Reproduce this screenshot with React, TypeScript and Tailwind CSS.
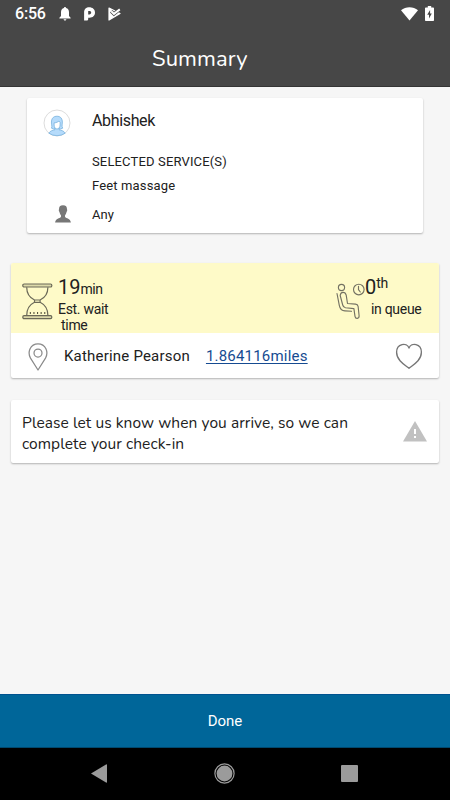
import type { ReactNode } from 'react';

function StatusBar() {
  return (
    <div className="flex h-[27px] items-center text-white">
      <span className="ml-[15px] w-[44px] text-[16px] leading-[27px] font-medium tracking-[-0.2px]">6:56</span>
      <svg width="12" height="14" viewBox="0 0 12 14" fill="currentColor">
        <path d="M6 0C5.300 0 5 .5 5 1.100C2.900 1.600 2 3.300 2 5.300V9L.4 10.700V11.500H11.600V10.700L10 9V5.300C10 3.300 9.100 1.600 7 1.100C7 .5 6.700 0 6 0ZM4.600 12.200C4.700 13 5.300 13.500 6 13.500S7.300 13 7.400 12.200Z" />
      </svg>
      <svg className="ml-[13px]" width="11" height="14" viewBox="0 0 11 14" fill="currentColor" fillRule="evenodd">
        <path d="M5.200.3C8.500.3 11 2.400 11 5.600S8.600 10.800 5.700 10.800H4.200V12C4.200 13 3.500 13.600 2.500 13.600H.1V5.200C.1 2.300 2.200.3 5.200.3ZM4.200 3.900V7.400H5.300C6.500 7.400 7.200 6.700 7.200 5.600S6.500 3.900 5.300 3.900Z" />
      </svg>
      <svg className="ml-[13px]" width="13" height="14" viewBox="0 0 13 14">
        <path d="M1 1L12 6.500L1 13Z" fill="currentColor" stroke="currentColor" strokeWidth="1.200" strokeLinejoin="round" />
        <path d="M3.200 4.200L5.900 6.900L13 1.300" fill="none" stroke="#474747" strokeWidth="3.400" />
        <path d="M3.300 4.300L5.900 6.900L11.800 2.400" fill="none" stroke="currentColor" strokeWidth="2" />
      </svg>
      <svg className="ml-auto" width="17" height="14" viewBox="0 0 17 14" fill="currentColor">
        <path d="M0 3.200C4.700-.7 12.300-.7 17 3.200L8.500 13.500Z" />
      </svg>
      <svg className="mr-[16px] ml-[7px]" width="9" height="15" viewBox="0 0 9 15">
        <path d="M2.800 0H6.200V1.500H8.200Q9 1.500 9 2.300V14.200Q9 15 8.200 15H.8Q0 15 0 14.200V2.300Q0 1.500.8 1.500H2.800Z" fill="currentColor" />
        <path d="M5.100 4L2.200 8.800H4V12.500L6.800 7.500H5.100Z" fill="#474747" />
      </svg>
    </div>
  );
}

function Avatar() {
  return (
    <svg width="28" height="28" viewBox="0 0 28 28">
      <circle cx="14" cy="14" r="13" fill="#fff" stroke="#dcdcdc" strokeWidth="1" />
      <g stroke="#79b2de" strokeWidth=".8" strokeLinejoin="round">
        <path d="M8.500 19.200C9.500 17 8 15 8.500 12C8.800 8.800 11 7.200 14 7.200S19 9 19.300 12C19.700 15 18.300 17 19.700 19.200L17.500 20H10.500Z" fill="#b5dbfb" />
        <path d="M5.800 24.200C7.200 21.600 9.800 21.400 12 20.700V18H16V20.700C18.200 21.400 20.800 21.600 22.200 24.200Q18.400 26.700 14 26.700T5.800 24.200Z" fill="#b5dbfb" />
        <path d="M11.100 13.900C13.500 13.700 15 12.900 16 12L17.100 13.500V16C17 18.300 15.700 20 14 20S11.200 18.300 11.100 16Z" fill="#fff" />
      </g>
    </svg>
  );
}

function PersonIcon() {
  return (
    <svg width="16" height="18" viewBox="0 0 18 18" preserveAspectRatio="none" fill="#777">
      <path d="M9 .2C12.200.2 13.700 1.800 13.500 4.400C14 4.500 13.700 6.300 13 6.900C12.700 8.500 11.800 9.400 11.300 10.200V12C12.900 13.600 17 13.300 17.900 17.500H.1C1 13.300 5.100 13.600 6.700 12V10.200C6.200 9.400 5.300 8.500 5 6.900C4.300 6.300 4 4.500 4.500 4.400C4.300 1.800 5.800.2 9 .2Z" />
    </svg>
  );
}

function HourglassIcon() {
  return (
    <svg width="31" height="37" viewBox="0 0 31 37" fill="none" stroke="#6b6958" strokeWidth="1.200">
      <rect x=".8" y="1" width="29" height="3" rx="1.300" fill="#dcd9a9" />
      <rect x=".8" y="32.600" width="29" height="3" rx="1.300" fill="#dcd9a9" />
      <path d="M4.700 4.200C4.700 11 7.400 14.500 12.500 17V19.200C7.400 21.700 4.700 25.500 4.700 32.400M25.900 4.200C25.900 11 23.200 14.500 18.100 17V19.200C23.200 21.700 25.900 25.500 25.900 32.400M12.300 17H18.300M12.300 19.300H18.300" />
      <path d="M7.800 30H24" stroke="#55533f" strokeWidth="2" strokeDasharray="1.100 2.500" />
    </svg>
  );
}

function WaitingIcon() {
  return (
    <svg width="29" height="37" viewBox="0 0 29 37" fill="none" stroke="#747263" strokeWidth="1.150" strokeLinecap="round" strokeLinejoin="round">
      <circle cx="5.500" cy="4.500" r="3.100" />
      <circle cx="22.800" cy="6.500" r="5.300" />
      <path d="M22.500 3.200V6.700L24.300 9" />
      <path d="M4.200 12.500C4.500 8.300 9.300 8.300 10.200 12.200L11.500 20.500L19.500 21.100Q21.700 21.400 22.100 23.300L23.100 32.800C23.300 36 19.500 36.200 19 33.300L17.900 25.600L9.500 24.800Q7.300 24.400 6.700 22Z" />
      <path d="M1 10.500L3.300 22.300C4 26 5.500 27.700 9 27.900L15.500 28.300" />
    </svg>
  );
}

function PinIcon() {
  return (
    <svg width="20" height="28" viewBox="0 0 20 28" fill="none" stroke="#8a8a8a" strokeWidth="1.250">
      <path d="M10 27L2.500 15.200C-.8 9.300 2.200 .8 10 .8S20.800 9.300 17.500 15.200Z" strokeLinejoin="round" />
      <circle cx="10" cy="10" r="4" />
    </svg>
  );
}

function HeartIcon() {
  return (
    <svg width="28" height="27" viewBox="0 0 28 27" fill="none" stroke="#777" strokeWidth="1.350">
      <path d="M14 25.300C10 22 1.600 17.500 1.600 9.200C1.600 .5 11.800-1 14 5C16.200-1 26.400 .5 26.400 9.200C26.400 17.500 18 22 14 25.300Z" strokeLinejoin="round" />
    </svg>
  );
}

function WarningIcon() {
  return (
    <svg width="24" height="21" viewBox="0 0 24 21">
      <path d="M12 0L24 20.500H0Z" fill="#c1c1c1" />
      <path d="M11 8H13V13H11ZM11 15H13V17H11Z" fill="#fff" />
    </svg>
  );
}

function Card({ className, children }: { className: string; children: ReactNode }) {
  return (
    <section className={`overflow-hidden rounded-[2px] bg-white shadow-[0_1px_2px_rgba(0,0,0,0.28)] ${className}`}>
      {children}
    </section>
  );
}

export default function App() {
  return (
    <div className="flex h-[800px] w-[450px] flex-col bg-[#f6f6f6] font-['Roboto','Liberation_Sans',sans-serif] text-[#212121]">
      <header className="h-[87px] shrink-0 border-b border-[#353535] bg-[#474747]">
        <StatusBar />
        <h1 className="ml-[152px] pt-[15px] font-['Nunito','Lato',sans-serif] text-[22px] leading-[34px] tracking-[0.1px] text-white">Summary</h1>
      </header>

      <main className="flex-1">
        {/* Guest and selected services */}
        <Card className="mx-[27px] mt-[11px] h-[135px]">
          <div className="flex h-[50px] items-center pl-[16px]">
            <Avatar />
            <span className="-mt-[4px] ml-[21px] text-[16px] leading-5 tracking-[-0.35px]">Abhishek</span>
          </div>
          <div className="pt-[4px] pl-[65px] text-[13px]">
            <p className="leading-[20px] tracking-[0.15px]">SELECTED SERVICE(S)</p>
            <p className="mt-[4px] leading-[20px] tracking-[0.15px]">Feet massage</p>
          </div>
          <div className="mt-[7px] flex items-center pl-[28px]">
            <PersonIcon />
            <span className="mt-[2px] ml-[21px] text-[13px] leading-[20px]">Any</span>
          </div>
        </Card>

        {/* Queue status */}
        <Card className="mx-[11px] mt-[30px] h-[115px]">
          <div className="flex h-[70px] items-start bg-[#fefac8]">
            <div className="mt-[20px] ml-[11px]">
              <HourglassIcon />
            </div>
            <div className="mt-[12px] ml-[5px] w-[90px]">
              <p className="h-[26px] text-[20px] leading-[25px]">19<span className="text-[14px] tracking-[-0.4px]">min</span></p>
              <p className="text-[14px] leading-[16px] tracking-[-0.3px]">Est. wait<br /><span className="ml-[3px]">time</span></p>
            </div>
            <div className="mt-[20px] ml-auto">
              <WaitingIcon />
            </div>
            <div className="mt-[12px] mr-[17px] w-[57px]">
              <p className="h-[26px] text-[20px] leading-[25px]">0<sup className="top-[-6px] text-[14px] tracking-[-0.4px]">th</sup></p>
              <p className="ml-[6px] text-[14px] leading-[16px] tracking-[-0.3px] whitespace-nowrap">in queue</p>
            </div>
          </div>
          <div className="flex h-[45px] items-center pt-[2px] pr-[16px] pl-[17px]">
            <PinIcon />
            <span className="ml-[16px] text-[15px] tracking-[0.2px]">Katherine Pearson</span>
            <a className="ml-[16px] text-[15px] tracking-[0.2px] text-[#164b91] underline underline-offset-2">1.864116miles</a>
            <div className="ml-auto">
              <HeartIcon />
            </div>
          </div>
        </Card>

        {/* Arrival notice */}
        <Card className="mx-[11px] mt-[22px] flex h-[63px] items-center pr-[12px] pl-[11px]">
          <p className="flex-1 pt-[2px] font-['Nunito','Lato',sans-serif] text-[15.500px] leading-[21px] tracking-[0.07px] whitespace-nowrap">
            Please let us know when you arrive, so we can<br />complete your check-in
          </p>
          <WarningIcon />
        </Card>
      </main>

      <button className="h-[54px] shrink-0 border-y border-t-[#00528f] border-b-[#00496f] bg-[#006699] pt-px text-[15px] text-white">Done</button>
      <nav className="flex h-[52px] shrink-0 items-center bg-black text-[#9b9b9b]">
        <svg className="-mt-px ml-[91px]" width="16" height="19" viewBox="0 0 16 19" fill="currentColor"><path d="M0 9.500L15 .5Q16 0 16 1V18Q16 19 15 18.500Z" /></svg>
        <svg className="-mt-px ml-[107px]" width="21" height="21" viewBox="0 0 21 21" fill="currentColor">
          <circle cx="10.500" cy="10.500" r="9.600" fill="none" stroke="currentColor" strokeWidth="1.200" />
          <circle cx="10.500" cy="10.500" r="7.900" />
        </svg>
        <div className="-mt-px ml-[106px] size-[17px] rounded-[1px] bg-[#9b9b9b]" />
      </nav>
    </div>
  );
}
